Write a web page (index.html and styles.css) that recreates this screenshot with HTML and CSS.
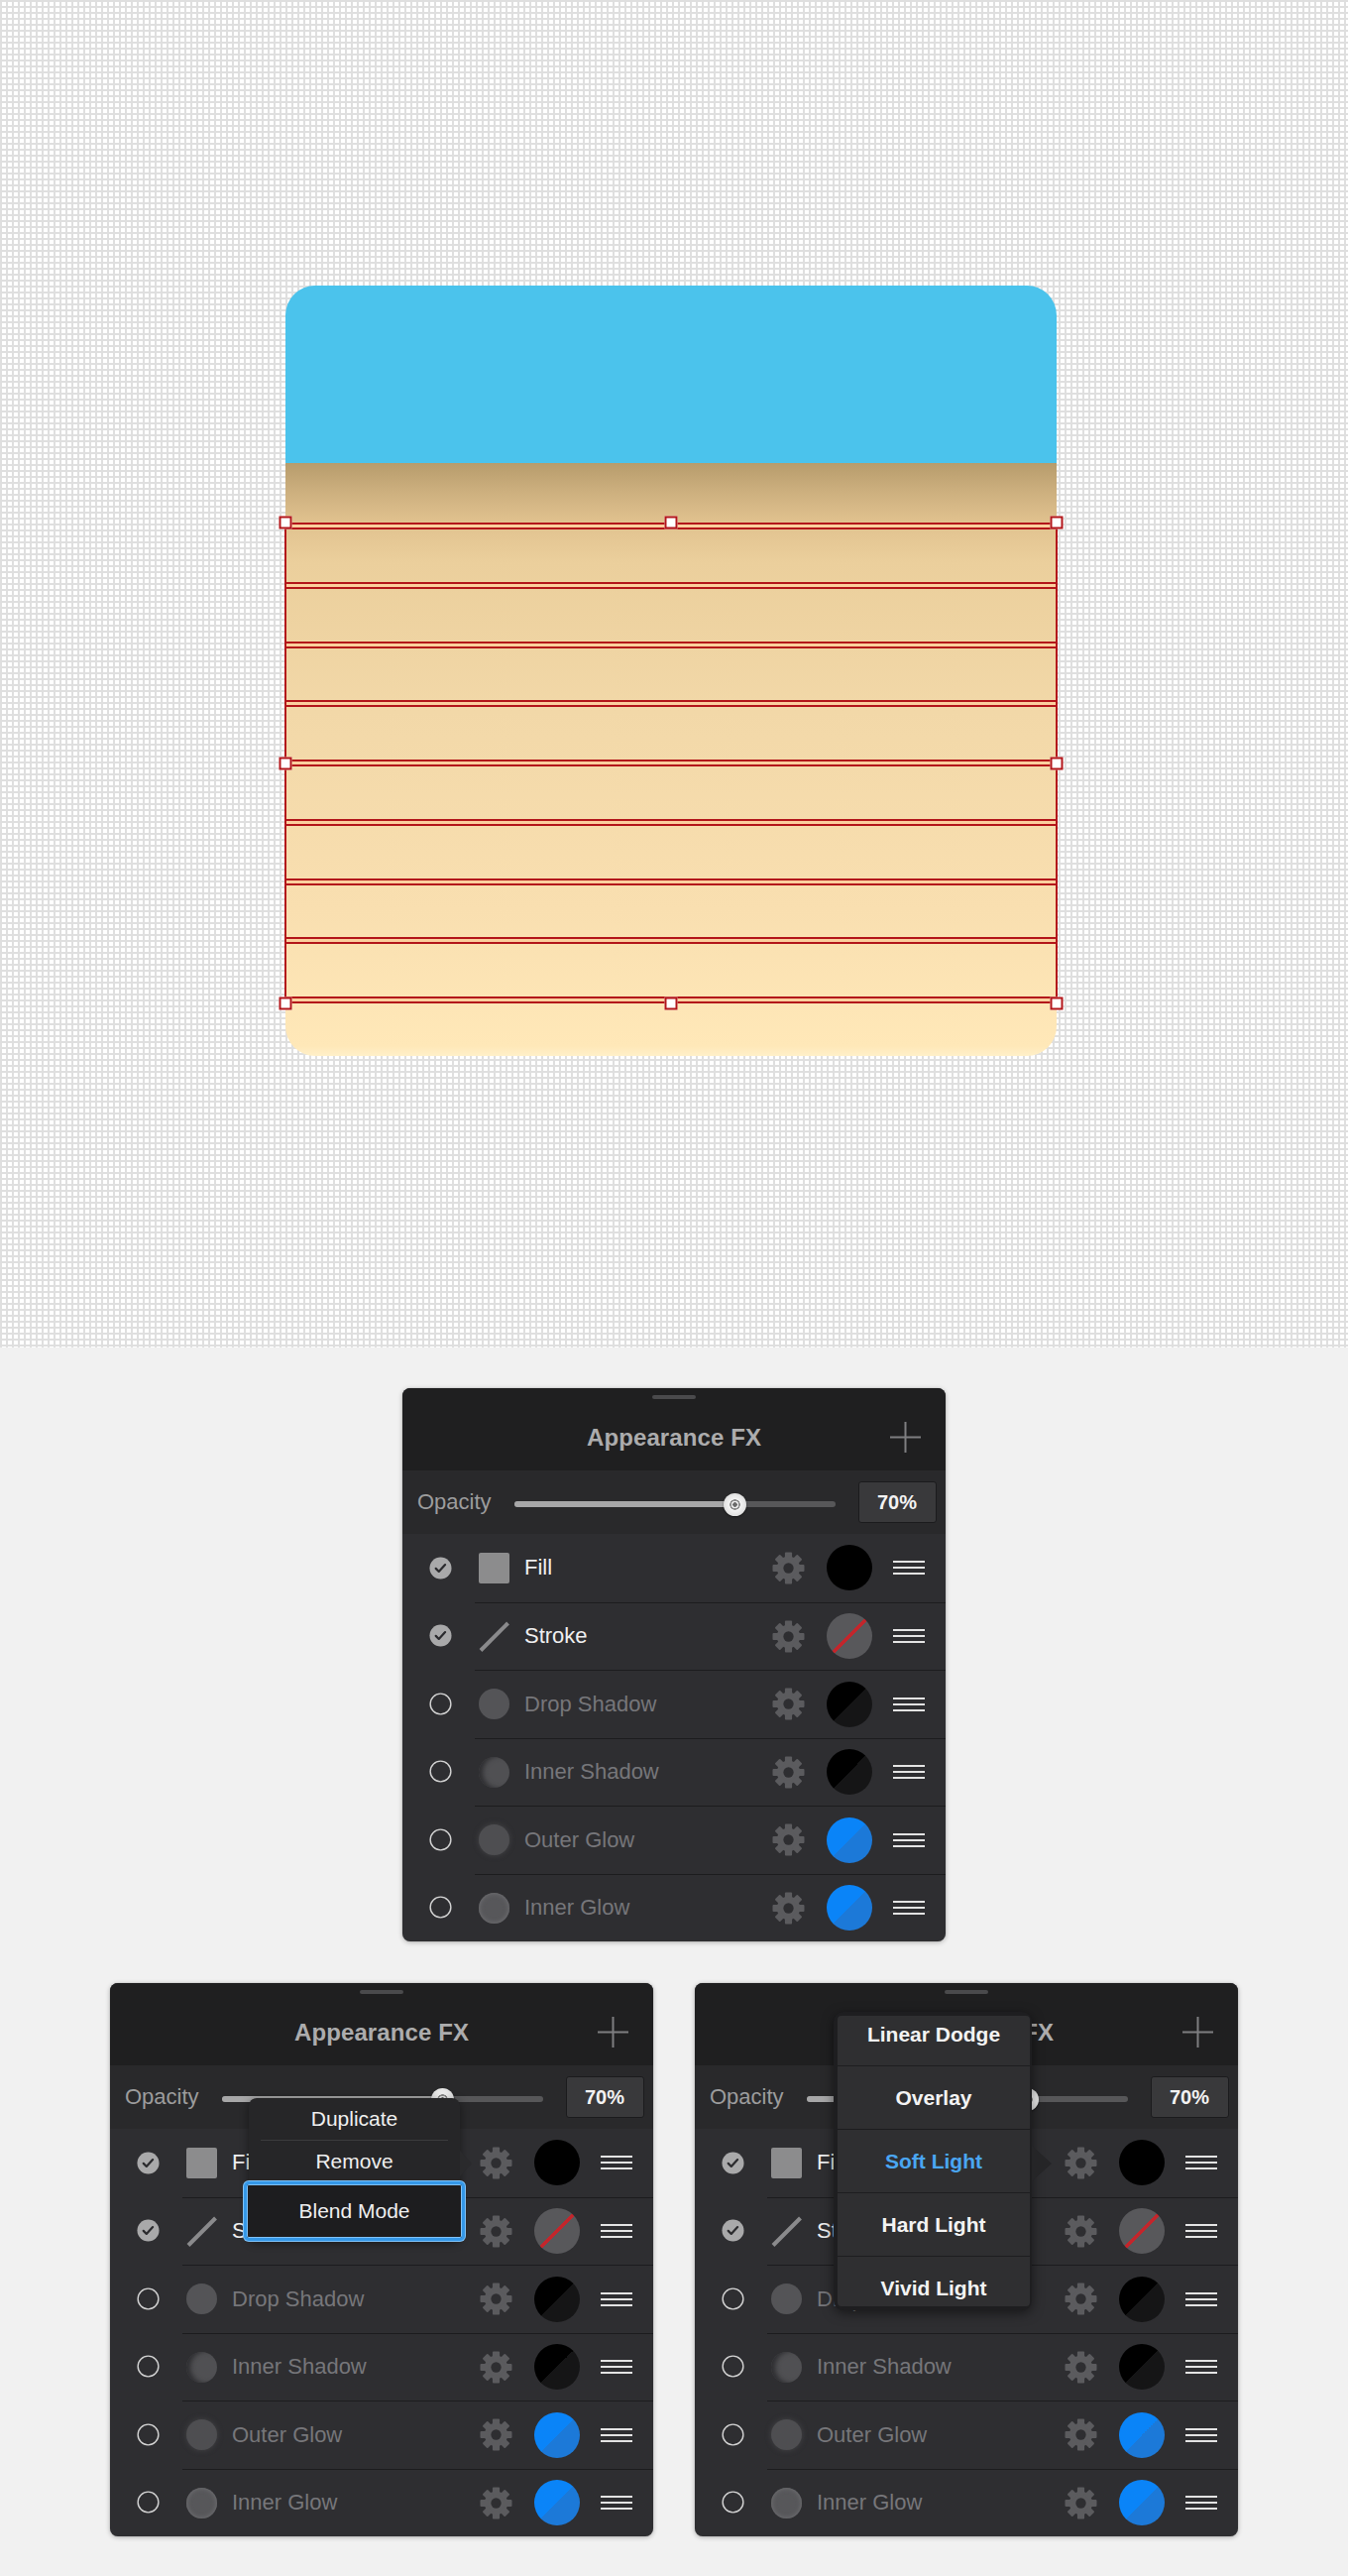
FILE: index.html
```html
<!DOCTYPE html>
<html>
<head>
<meta charset="utf-8">
<title>Appearance FX</title>
<link rel="stylesheet" href="styles.css">
</head>
<body>
<svg class="defs" aria-hidden="true">
  <defs>
    <symbol id="gear" viewBox="0 0 34 34">
      <g fill="#5b5b5e">
        <circle cx="17" cy="17" r="12"/>
        <rect x="13.3" y="0.5" width="7.4" height="8" rx="1"/>
        <rect x="13.3" y="0.5" width="7.4" height="8" rx="1" transform="rotate(45 17 17)"/>
        <rect x="13.3" y="0.5" width="7.4" height="8" rx="1" transform="rotate(90 17 17)"/>
        <rect x="13.3" y="0.5" width="7.4" height="8" rx="1" transform="rotate(135 17 17)"/>
        <rect x="13.3" y="0.5" width="7.4" height="8" rx="1" transform="rotate(180 17 17)"/>
        <rect x="13.3" y="0.5" width="7.4" height="8" rx="1" transform="rotate(225 17 17)"/>
        <rect x="13.3" y="0.5" width="7.4" height="8" rx="1" transform="rotate(270 17 17)"/>
        <rect x="13.3" y="0.5" width="7.4" height="8" rx="1" transform="rotate(315 17 17)"/>
      </g>
      <circle cx="17" cy="17" r="5.3" fill="#2e2e31"/>
    </symbol>
    <symbol id="chk-on" viewBox="0 0 24 24">
      <circle cx="12" cy="12" r="11.5" fill="#a9a9aa"/>
      <path d="M7 12.4l3.2 3.2 6.6-7.2" fill="none" stroke="#2b2b2e" stroke-width="2.3" stroke-linecap="round" stroke-linejoin="round"/>
    </symbol>
    <symbol id="chk-off" viewBox="0 0 24 24">
      <circle cx="12" cy="12" r="10.8" fill="none" stroke="#d2d2d2" stroke-width="1.5"/>
    </symbol>
    <symbol id="burger" viewBox="0 0 32 14">
      <rect x="0" y="0" width="32" height="2" fill="#e3e3e3"/>
      <rect x="0" y="6" width="32" height="2" fill="#e3e3e3"/>
      <rect x="0" y="12" width="32" height="2" fill="#e3e3e3"/>
    </symbol>
    <symbol id="plus" viewBox="0 0 31 31">
      <path d="M15.5 0v31M0 15.5h31" stroke="#7e7e80" stroke-width="2" fill="none"/>
    </symbol>
    <symbol id="strk" viewBox="0 0 31 31">
      <path d="M2 29.5L29.5 2" stroke="#8a8a8c" stroke-width="4" fill="none"/>
    </symbol>
  </defs>
</svg>

<div class="canvas">
  <div class="art">
    <div class="sky"></div>
    <div class="sand"></div>
    <div class="sel">
      <span class="band"></span><span class="band"></span><span class="band"></span>
      <span class="band"></span><span class="band"></span><span class="band"></span>
      <span class="band"></span><span class="band"></span><span class="band"></span>
      <span class="hd tl"></span><span class="hd tm"></span><span class="hd tr"></span>
      <span class="hd ml"></span><span class="hd mr"></span>
      <span class="hd bl"></span><span class="hd bm"></span><span class="hd br"></span>
    </div>
  </div>
</div>

<div class="stage">
  <!-- Panel 1 -->
  <div class="panel">
    <div class="head">
      <span class="grab"></span>
      <div class="bar">
        <h2 class="title">Appearance FX</h2>
        <svg class="plus"><use href="#plus"/></svg>
      </div>
    </div>
    <div class="opac">
      <span class="olabel">Opacity</span>
      <div class="track"><div class="tfill"></div><span class="thumb"></span></div>
      <div class="val">70%</div>
    </div>
    <ul class="fx">
      <li><div class="chk"><svg><use href="#chk-on"/></svg></div><div class="main"><span class="ico sq"></span><span class="name">Fill</span><svg class="gear"><use href="#gear"/></svg><span class="sw black"></span><svg class="burg"><use href="#burger"/></svg></div></li>
      <li><div class="chk"><svg><use href="#chk-on"/></svg></div><div class="main"><svg class="ico"><use href="#strk"/></svg><span class="name">Stroke</span><svg class="gear"><use href="#gear"/></svg><span class="sw none"></span><svg class="burg"><use href="#burger"/></svg></div></li>
      <li class="off"><div class="chk"><svg><use href="#chk-off"/></svg></div><div class="main"><span class="ico ds"></span><span class="name">Drop Shadow</span><svg class="gear"><use href="#gear"/></svg><span class="sw shade"></span><svg class="burg"><use href="#burger"/></svg></div></li>
      <li class="off"><div class="chk"><svg><use href="#chk-off"/></svg></div><div class="main"><span class="ico is"></span><span class="name">Inner Shadow</span><svg class="gear"><use href="#gear"/></svg><span class="sw shade"></span><svg class="burg"><use href="#burger"/></svg></div></li>
      <li class="off"><div class="chk"><svg><use href="#chk-off"/></svg></div><div class="main"><span class="ico og"></span><span class="name">Outer Glow</span><svg class="gear"><use href="#gear"/></svg><span class="sw blue"></span><svg class="burg"><use href="#burger"/></svg></div></li>
      <li class="off"><div class="chk"><svg><use href="#chk-off"/></svg></div><div class="main"><span class="ico ig"></span><span class="name">Inner Glow</span><svg class="gear"><use href="#gear"/></svg><span class="sw blue"></span><svg class="burg"><use href="#burger"/></svg></div></li>
    </ul>
  </div>

  <div class="pair">
    <!-- Panel 2 -->
    <div class="panel">
      <div class="head">
        <span class="grab"></span>
        <div class="bar">
          <h2 class="title">Appearance FX</h2>
          <svg class="plus"><use href="#plus"/></svg>
        </div>
      </div>
      <div class="opac">
        <span class="olabel">Opacity</span>
        <div class="track"><div class="tfill"></div><span class="thumb"></span></div>
        <div class="val">70%</div>
      </div>
      <ul class="fx">
        <li><div class="chk"><svg><use href="#chk-on"/></svg></div><div class="main"><span class="ico sq"></span><span class="name">Fill</span><svg class="gear"><use href="#gear"/></svg><span class="sw black"></span><svg class="burg"><use href="#burger"/></svg></div></li>
        <li><div class="chk"><svg><use href="#chk-on"/></svg></div><div class="main"><svg class="ico"><use href="#strk"/></svg><span class="name">Stroke</span><svg class="gear"><use href="#gear"/></svg><span class="sw none"></span><svg class="burg"><use href="#burger"/></svg></div></li>
        <li class="off"><div class="chk"><svg><use href="#chk-off"/></svg></div><div class="main"><span class="ico ds"></span><span class="name">Drop Shadow</span><svg class="gear"><use href="#gear"/></svg><span class="sw shade"></span><svg class="burg"><use href="#burger"/></svg></div></li>
        <li class="off"><div class="chk"><svg><use href="#chk-off"/></svg></div><div class="main"><span class="ico is"></span><span class="name">Inner Shadow</span><svg class="gear"><use href="#gear"/></svg><span class="sw shade"></span><svg class="burg"><use href="#burger"/></svg></div></li>
        <li class="off"><div class="chk"><svg><use href="#chk-off"/></svg></div><div class="main"><span class="ico og"></span><span class="name">Outer Glow</span><svg class="gear"><use href="#gear"/></svg><span class="sw blue"></span><svg class="burg"><use href="#burger"/></svg></div></li>
        <li class="off"><div class="chk"><svg><use href="#chk-off"/></svg></div><div class="main"><span class="ico ig"></span><span class="name">Inner Glow</span><svg class="gear"><use href="#gear"/></svg><span class="sw blue"></span><svg class="burg"><use href="#burger"/></svg></div></li>
      </ul>
      <div class="ctx">
        <div class="it">Duplicate</div>
        <div class="sep"></div>
        <div class="it">Remove</div>
        <div class="it blend">Blend Mode</div>
      </div>
    </div>

    <!-- Panel 3 -->
    <div class="panel">
      <div class="head">
        <span class="grab"></span>
        <div class="bar">
          <h2 class="title">Appearance FX</h2>
          <svg class="plus"><use href="#plus"/></svg>
        </div>
      </div>
      <div class="opac">
        <span class="olabel">Opacity</span>
        <div class="track"><div class="tfill"></div><span class="thumb"></span></div>
        <div class="val">70%</div>
      </div>
      <ul class="fx">
        <li><div class="chk"><svg><use href="#chk-on"/></svg></div><div class="main"><span class="ico sq"></span><span class="name">Fill</span><svg class="gear"><use href="#gear"/></svg><span class="sw black"></span><svg class="burg"><use href="#burger"/></svg></div></li>
        <li><div class="chk"><svg><use href="#chk-on"/></svg></div><div class="main"><svg class="ico"><use href="#strk"/></svg><span class="name">Stroke</span><svg class="gear"><use href="#gear"/></svg><span class="sw none"></span><svg class="burg"><use href="#burger"/></svg></div></li>
        <li class="off"><div class="chk"><svg><use href="#chk-off"/></svg></div><div class="main"><span class="ico ds"></span><span class="name">Drop Shadow</span><svg class="gear"><use href="#gear"/></svg><span class="sw shade"></span><svg class="burg"><use href="#burger"/></svg></div></li>
        <li class="off"><div class="chk"><svg><use href="#chk-off"/></svg></div><div class="main"><span class="ico is"></span><span class="name">Inner Shadow</span><svg class="gear"><use href="#gear"/></svg><span class="sw shade"></span><svg class="burg"><use href="#burger"/></svg></div></li>
        <li class="off"><div class="chk"><svg><use href="#chk-off"/></svg></div><div class="main"><span class="ico og"></span><span class="name">Outer Glow</span><svg class="gear"><use href="#gear"/></svg><span class="sw blue"></span><svg class="burg"><use href="#burger"/></svg></div></li>
        <li class="off"><div class="chk"><svg><use href="#chk-off"/></svg></div><div class="main"><span class="ico ig"></span><span class="name">Inner Glow</span><svg class="gear"><use href="#gear"/></svg><span class="sw blue"></span><svg class="burg"><use href="#burger"/></svg></div></li>
      </ul>
      <div class="blist">
        <div class="scroll">
          <ul>
            <li>Linear Dodge</li>
            <li>Overlay</li>
            <li class="cur">Soft Light</li>
            <li>Hard Light</li>
            <li>Vivid Light</li>
          </ul>
        </div>
      </div>
    </div>
  </div>
</div>
</body>
</html>
```
FILE: styles.css
```css
* { box-sizing: border-box; }

html, body {
  margin: 0;
  padding: 0;
}

body {
  background: #f1f1f1;
  font-family: "Liberation Sans", Arial, Helvetica, sans-serif;
  height: 2598px;
}

.defs {
  position: absolute;
  width: 0;
  height: 0;
  overflow: hidden;
}

/* ---------- Canvas ---------- */
.canvas {
  height: 1359px;
  padding: 288px 0 0 288px;
  background-color: #ffffff;
  background-image:
    linear-gradient(to bottom, #dfdfdf 2px, transparent 2px),
    linear-gradient(to right, #dfdfdf 2px, transparent 2px);
  background-size: 6px 6px;
}

.art {
  position: relative;
  width: 778px;
  height: 777px;
  display: flex;
  flex-direction: column;
}

.sky {
  height: 179px;
  background: #4bc3ec;
  border-radius: 30px 30px 0 0;
}

.sand {
  flex: 1;
  border-radius: 0 0 30px 30px;
  background: linear-gradient(to bottom,
    #b79c6c 0px,
    #ccaf7e 28px,
    #e0c18e 58px,
    #ebcf9c 100px,
    #f2d8a8 250px,
    #f9dfb0 450px,
    #ffe8b8 588px,
    #fff0c9 598px);
}

.sel {
  position: absolute;
  left: -1px;
  top: 239px;
  width: 780px;
  height: 485px;
  border-left: 2px solid #b3161a;
  border-right: 2px solid #b3161a;
  display: flex;
  flex-direction: column;
  justify-content: space-between;
}

.band {
  display: block;
  height: 7px;
  border-top: 2px solid #b3161a;
  border-bottom: 2px solid #b3161a;
  background: #fbcf9e;
}

.hd {
  position: absolute;
  width: 13px;
  height: 13px;
  background: #ffffff;
  border: 2px solid #b3161a;
  transform: translate(-50%, -50%);
}
.hd.tl { left: -1px; top: 0; }
.hd.tm { left: 50%; top: 0; }
.hd.tr { left: calc(100% + 1px); top: 0; }
.hd.ml { left: -1px; top: 50%; }
.hd.mr { left: calc(100% + 1px); top: 50%; }
.hd.bl { left: -1px; top: 100%; }
.hd.bm { left: 50%; top: 100%; }
.hd.br { left: calc(100% + 1px); top: 100%; }

/* ---------- Panels ---------- */
.stage {
  padding-top: 41px;
  display: flex;
  flex-direction: column;
  align-items: center;
  gap: 42px;
}

.pair {
  display: flex;
  gap: 42px;
}

.panel {
  position: relative;
  width: 548px;
  height: 558px;
  background: #2e2e31;
  border-radius: 8px;
  box-shadow: 0 1px 5px rgba(0, 0, 0, 0.28), 0 0 1px rgba(0, 0, 0, 0.35);
}

.head {
  height: 83px;
  background: #1f1f20;
  border-radius: 8px 8px 0 0;
  display: flex;
  flex-direction: column;
}

.grab {
  display: block;
  width: 44px;
  height: 4px;
  margin: 7px auto 0;
  background: #4a4a4c;
  border-radius: 2px;
}

.bar {
  flex: 1;
  display: grid;
  grid-template-columns: 1fr auto 1fr;
  align-items: center;
  padding-top: 5px;
}

.title {
  grid-column: 2;
  margin: 0;
  font-size: 24px;
  font-weight: bold;
  color: #acacad;
  letter-spacing: 0.1px;
}

.plus {
  grid-column: 3;
  justify-self: end;
  width: 31px;
  height: 31px;
  margin-right: 25px;
}

.opac {
  height: 64px;
  background: #29292b;
  display: flex;
  align-items: center;
}

.olabel {
  width: 113px;
  padding-left: 15px;
  font-size: 22px;
  color: #9c9c9d;
}

.track {
  position: relative;
  width: 324px;
  height: 6px;
  margin-top: 4px;
  border-radius: 3px;
  background: #575759;
}

.tfill {
  width: 222px;
  height: 6px;
  border-radius: 3px;
  background: #a7a7a8;
}

.thumb {
  position: absolute;
  left: 222px;
  top: 50%;
  width: 23px;
  height: 23px;
  margin: -11.5px 0 0 -11.5px;
  border-radius: 50%;
  background: radial-gradient(circle, #6a6a6a 0 2px, #eeeeee 2.5px 3.5px, #8c8c8c 4px 5px, #f4f4f4 5.5px, #d0d0d0 100%);
  box-shadow: 0 1px 2px rgba(0, 0, 0, 0.5);
}

.val {
  margin-left: 22.5px;
  width: 79px;
  height: 42px;
  background: #39393b;
  border: 1px solid #1b1b1d;
  border-radius: 3px;
  color: #f2f2f2;
  font-weight: bold;
  font-size: 20px;
  display: flex;
  align-items: center;
  justify-content: center;
}

.fx {
  list-style: none;
  margin: 0;
  padding: 0;
}

.fx li {
  height: 68.5px;
  display: flex;
}

.chk {
  width: 73px;
  padding-left: 27px;
  display: flex;
  align-items: center;
}

.chk svg {
  width: 23px;
  height: 23px;
}

.main {
  flex: 1;
  display: flex;
  align-items: center;
  border-top: 1px solid #1c1c1e;
}

.fx li:first-child .main {
  border-top: 0;
}

.ico {
  display: block;
  flex: none;
  width: 31px;
  height: 31px;
  margin-left: 3.5px;
}

.ico.sq { background: #8c8c8d; border-radius: 2px; }
.ico.ds { border-radius: 50%; background: #545457; }
.ico.is { border-radius: 50%; background: #505053; box-shadow: inset 5px 0 5px -1px #2e2e31; }
.ico.og { border-radius: 50%; background: #4e4e51; box-shadow: 0 0 5px 1px #3e3e41; }
.ico.ig { border-radius: 50%; background: #57575a; box-shadow: inset 0 0 4px 1px #6c6c6f; }

.name {
  flex: 1;
  margin-left: 15.5px;
  font-size: 22px;
  color: #eeeeef;
  white-space: nowrap;
}

.off .name {
  color: #76767a;
}

.gear {
  flex: none;
  width: 33px;
  height: 33px;
  margin-right: 22px;
}

.sw {
  flex: none;
  width: 46px;
  height: 46px;
  border-radius: 50%;
  margin-right: 21px;
}

.sw.black { background: #000000; }
.sw.none {
  background: linear-gradient(to bottom right,
    #58585b calc(50% - 2px), #c2262c calc(50% - 2px),
    #c2262c calc(50% + 2px), #58585b calc(50% + 2px));
}
.sw.shade { background: linear-gradient(to bottom right, #000000 50%, #151516 50%); }
.sw.blue { background: linear-gradient(to bottom right, #0a84f8 50%, #1c79d8 50%); }

.burg {
  flex: none;
  width: 32px;
  height: 14px;
  margin-right: 21px;
}

/* ---------- Context menu (panel 2) ---------- */
.ctx {
  position: absolute;
  left: 140px;
  top: 116px;
  width: 213px;
  background: #262628;
  border-radius: 8px;
  box-shadow: 0 2px 10px rgba(0, 0, 0, 0.45);
}

.ctx::after {
  content: "";
  position: absolute;
  right: -12px;
  top: 53px;
  border-left: 12px solid #2a2a2c;
  border-top: 13px solid transparent;
  border-bottom: 13px solid transparent;
}

.ctx .it {
  height: 42px;
  display: flex;
  align-items: center;
  justify-content: center;
  color: #efefef;
  font-size: 21px;
}

.ctx .sep {
  height: 1px;
  margin: 0 12px;
  background: #3b3b3d;
}

.ctx .blend {
  position: relative;
  z-index: 1;
  height: 60px;
  margin: -1px -5px 0;
  background: #1d1d1f;
  border: 3px solid #3598e8;
  border-radius: 5px;
  box-shadow: 0 0 0 1px #7fc1f6, inset 0 0 0 1px #7fc1f6;
  font-size: 21px;
}

/* ---------- Blend list (panel 3) ---------- */
.blist {
  position: absolute;
  left: 140px;
  top: 29px;
  width: 200px;
  height: 301px;
  padding: 4px 2px 4px 4px;
  background: #1e1e20;
  border-radius: 10px;
  box-shadow: 0 3px 12px rgba(0, 0, 0, 0.5);
}

.blist::after {
  content: "";
  position: absolute;
  right: -20px;
  top: 135px;
  border-left: 20px solid #252527;
  border-top: 18px solid transparent;
  border-bottom: 18px solid transparent;
}

.blist .scroll {
  height: 100%;
  overflow: hidden;
  border-radius: 4px;
}

.blist ul {
  list-style: none;
  margin: -13px 0 0;
  padding: 0;
}

.blist li {
  height: 64px;
  border-bottom: 1px solid #1d1d1f;
  background: #2f2f31;
  display: flex;
  align-items: center;
  justify-content: center;
  color: #f3f3f3;
  font-size: 21px;
  font-weight: bold;
}

.blist li.cur {
  color: #4aa6f2;
}
```
